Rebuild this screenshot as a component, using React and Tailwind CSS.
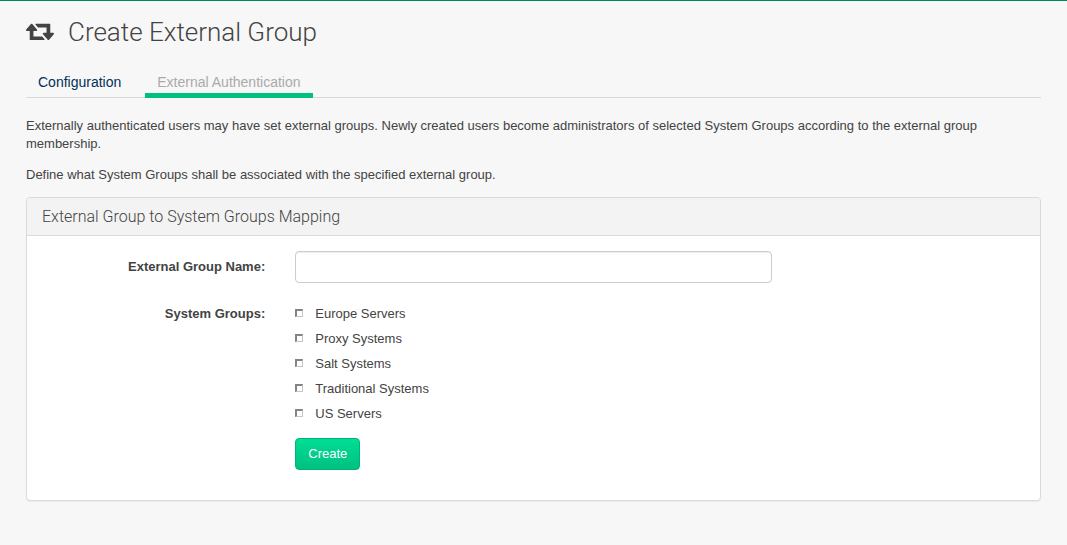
const groups = [
  "Europe Servers",
  "Proxy Systems",
  "Salt Systems",
  "Traditional Systems",
  "US Servers",
];

function SwapIcon() {
  return (
    <svg viewBox="0 256 1920 1280" preserveAspectRatio="none" className="mb-0.5 h-[18px] w-7" fill="currentColor" aria-hidden="true">
      <path d="M1280 1504q0 13-9.5 22.5t-22.5 9.5h-960q-8 0-13.5-2t-9-7-5.5-8-3-11.5-1-11.5v-600h-192q-26 0-45-19t-19-45q0-24 15-41l320-384q19-22 49-22t49 22l320 384q15 17 15 41 0 26-19 45t-45 19h-192v384h576q16 0 25 11l160 192q7 11 7 21zm640-416q0 24-15 41l-320 384q-20 23-49 23t-49-23l-320-384q-15-17-15-41 0-26 19-45t45-19h192v-384h-576q-16 0-25-12l-160-192q-7-9-7-20 0-13 9.5-22.5t22.5-9.5h960q8 0 13.5 2t9 7 5.5 8 3 11.5 1 11.5v600h192q26 0 45 19t19 45z" />
    </svg>
  );
}

function Tabs() {
  return (
    <nav className="mt-5 flex gap-3 border-b border-[#dadada] text-[14px] leading-5">
      <a href="#configuration" className="px-3 pt-[3px] pb-[5px] text-[#02305a]">
        Configuration
      </a>
      <a
        href="#external"
        aria-current="page"
        className="-mb-px border-b-5 border-[#00c081] px-3 pt-[3px] text-[#aaaaaa]"
      >
        External Authentication
      </a>
    </nav>
  );
}

function MappingForm() {
  return (
    <form className="pt-[15px] pb-[30px]" onSubmit={(e) => e.preventDefault()}>
      <div className="grid grid-cols-4">
        <label htmlFor="group-name" className="px-[15px] pt-[7px] text-right font-bold">
          External Group Name:
        </label>
        <div className="col-span-2 px-[15px]">
          <input
            id="group-name"
            type="text"
            className="block h-8 w-full rounded border border-[#cccccc] bg-white px-3 shadow-[inset_0_1px_1px_rgba(0,0,0,0.075)]"
          />
        </div>
      </div>
      <div className="mt-[15px] grid grid-cols-4" role="group" aria-labelledby="groups-label">
        <div id="groups-label" className="px-[15px] pt-[7px] text-right font-bold">
          System Groups:
        </div>
        <div className="col-span-2 flex flex-col items-start gap-[7px] px-[15px] pt-[7px]">
          {groups.map((name) => (
            <label key={name} className="flex items-center gap-3">
              <input
                type="checkbox"
                className="mb-0.5 size-2 appearance-none border-t-2 border-r border-b border-l-2 border-t-[#848484] border-r-[#c8c5c0] border-b-[#c8c5c0] border-l-[#848484] bg-white checked:bg-[#434343]"
              />
              {name}
            </label>
          ))}
        </div>
      </div>
      <div className="mt-[15px] grid grid-cols-4">
        <div className="col-span-2 col-start-2 px-[15px]">
          <button
            type="submit"
            className="block h-8 rounded border border-[#00b377] bg-linear-to-b from-[#00de95] to-[#00c081] px-3 text-white"
          >
            Create
          </button>
        </div>
      </div>
    </form>
  );
}

export default function App() {
  return (
    <div className="min-h-screen border-t border-[#00875a] bg-[#f7f7f7] px-[26px] pb-11 font-['Liberation_Sans',sans-serif] text-[13px] leading-[18px] text-[#434343]">
      <h1 className="flex items-center gap-3.5 pt-3.5 font-['Roboto',sans-serif] text-[26px] leading-[34px] font-light">
        <SwapIcon />
        Create External Group
      </h1>
      <Tabs />
      <p className="mt-[19px]">
        Externally authenticated users may have set external groups. Newly created users become
        administrators of selected System Groups according to the external group membership.
      </p>
      <p className="mt-[13px]">
        Define what System Groups shall be associated with the specified external group.
      </p>
      <section className="mt-[13px] rounded border border-[#dadada] bg-white shadow-[0_1px_1px_rgba(0,0,0,0.05)]">
        <h2 className="rounded-t border-b border-[#dadada] bg-[#f3f3f3] px-[15px] py-2.5 font-['Roboto',sans-serif] text-[16px] leading-[17px] font-light">
          External Group to System Groups Mapping
        </h2>
        <MappingForm />
      </section>
    </div>
  );
}
